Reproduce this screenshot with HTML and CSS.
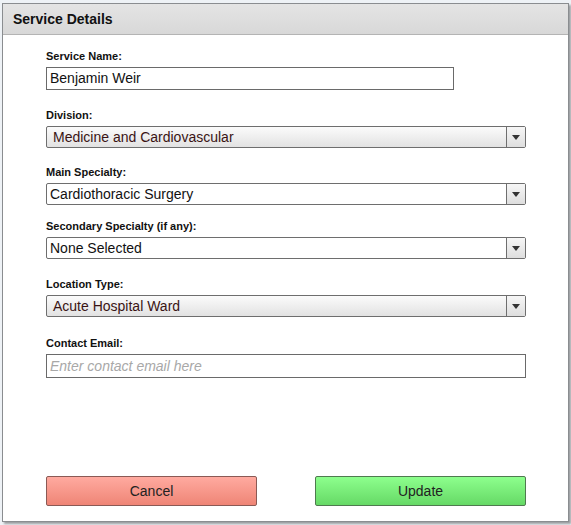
FILE: index.html
```html
<!DOCTYPE html>
<html>
<head>
<meta charset="utf-8">
<link rel="stylesheet" href="styles.css">
</head>
<body>
<div class="panel">
  <div class="panel-header">Service Details</div>
  <div class="panel-body">
    <div class="field field-loose">
      <div class="label">Service Name:</div>
      <div class="input input-short">Benjamin Weir</div>
    </div>
    <div class="field">
      <div class="label">Division:</div>
      <div class="select select-active"><span class="select-text">Medicine and Cardiovascular</span><span class="select-btn"><span class="tri"></span></span></div>
    </div>
    <div class="field field-tight">
      <div class="label">Main Specialty:</div>
      <div class="select"><span class="select-text">Cardiothoracic Surgery</span><span class="select-btn"><span class="tri"></span></span></div>
    </div>
    <div class="field field-loose">
      <div class="label">Secondary Specialty (if any):</div>
      <div class="select"><span class="select-text">None Selected</span><span class="select-btn"><span class="tri"></span></span></div>
    </div>
    <div class="field field-wide">
      <div class="label">Location Type:</div>
      <div class="select select-active"><span class="select-text">Acute Hospital Ward</span><span class="select-btn"><span class="tri"></span></span></div>
    </div>
    <div class="field">
      <div class="label">Contact Email:</div>
      <div class="input input-full input-tall placeholder">Enter contact email here</div>
    </div>
    <div class="actions">
      <div class="btn btn-cancel">Cancel</div>
      <div class="btn btn-update">Update</div>
    </div>
  </div>
</div>
</body>
</html>
```
FILE: styles.css
```css
html, body {
  margin: 0;
  padding: 0;
}
body {
  background: #eef2f6;
  font-family: "Liberation Sans", Arial, sans-serif;
  color: #111;
  width: 571px;
  height: 525px;
  overflow: hidden;
}
.panel {
  margin: 3px 0 0 2px;
  width: 565px;
  height: 517px;
  border: 1px solid #8a8d90;
  background: #fff;
  box-shadow: 2px 2px 2px rgba(0,0,0,0.35);
  display: flex;
  flex-direction: column;
}
.panel-header {
  height: 30px;
  line-height: 30px;
  border-bottom: 1px solid #b4b4b4;
  background: linear-gradient(#e4e4e4, #d8d8d8);
  padding-left: 10px;
  font-weight: bold;
  font-size: 14px;
  color: #111;
}
.panel-body {
  flex: 1;
  display: flex;
  flex-direction: column;
  padding: 15px 0 15px 43px;
}
.field {
  margin-bottom: 18px;
}
.field-loose {
  margin-bottom: 19px;
}
.field-wide {
  margin-bottom: 20px;
}
.field-tight {
  margin-bottom: 15px;
}
.label {
  font-size: 11px;
  font-weight: bold;
  line-height: 13px;
  margin-bottom: 4px;
  color: #111;
}
.input {
  box-sizing: border-box;
  height: 23px;
  border: 1px solid #6a6a6a;
  font-size: 14px;
  line-height: 21px;
  padding-left: 3px;
  color: #111;
}
.input-tall {
  height: 24px;
  line-height: 22px;
}
.input-short { width: 408px; }
.input-full { width: 480px; }
.placeholder {
  color: #a8a8a8;
  font-style: italic;
}
.select {
  box-sizing: border-box;
  width: 480px;
  height: 22px;
  border: 1px solid #6e6e6e;
  border-radius: 2px;
  display: flex;
  background: #fff;
  font-size: 14px;
  line-height: 20px;
}
.select-text {
  flex: 1;
  padding-left: 3px;
  color: #111;
}
.select-active {
  background: linear-gradient(#fbfbfb, #e2e2e2);
}
.select-active .select-text {
  padding-left: 6px;
  color: #3a1414;
}
.select-btn {
  width: 18px;
  border-left: 1px solid #6e6e6e;
  background: linear-gradient(#f6f6f6, #dedede);
  display: flex;
  align-items: center;
  justify-content: center;
}
.tri {
  width: 0;
  height: 0;
  border-left: 4px solid transparent;
  border-right: 4px solid transparent;
  border-top: 5px solid #333;
}
.actions {
  margin-top: auto;
  width: 480px;
  display: flex;
  justify-content: space-between;
}
.btn {
  box-sizing: border-box;
  width: 211px;
  height: 30px;
  border-radius: 2px;
  font-size: 14px;
  line-height: 28px;
  text-align: center;
  color: #222;
}
.btn-cancel {
  border: 1px solid #8a5a55;
  background: linear-gradient(#ffaaa0, #ef8576);
}
.btn-update {
  border: 1px solid #4f7a4f;
  background: linear-gradient(#8dff8d, #66d966);
}
```
